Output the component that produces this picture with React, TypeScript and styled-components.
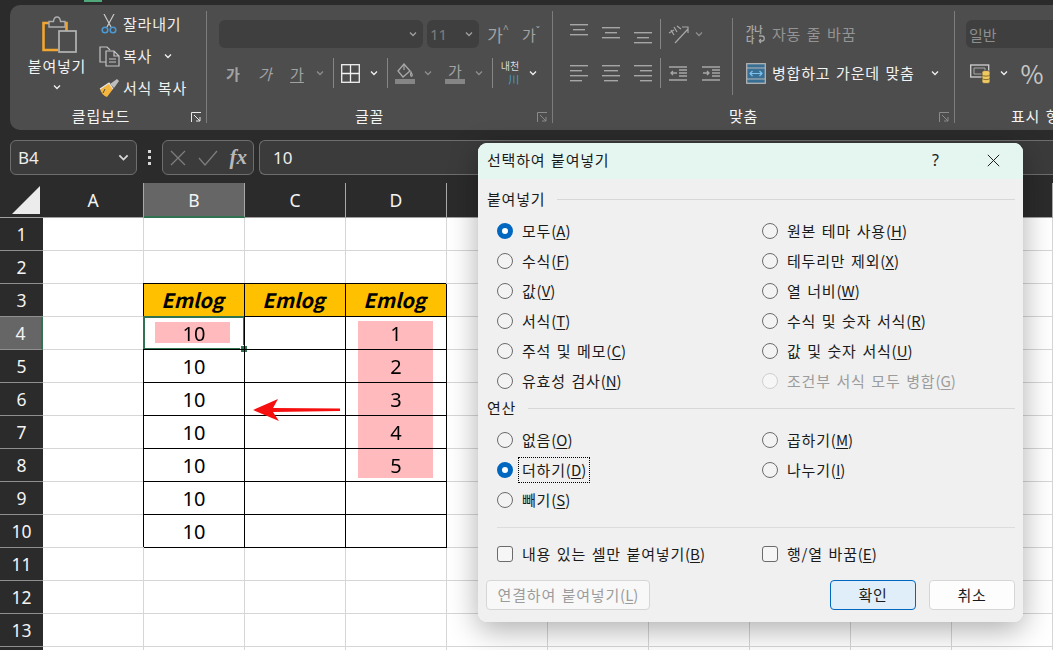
import React from 'react'
import styled, { createGlobalStyle } from 'styled-components'

const KR = '"Noto Sans CJK KR", "Noto Sans", sans-serif'

const GlobalStyle = createGlobalStyle`
  html, body { margin: 0; padding: 0; background: #2b2b2b; }
  * { box-sizing: border-box; }
`

const Page = styled.div`
  position: relative;
  width: 1053px;
  height: 650px;
  overflow: hidden;
  background: #2b2b2b;
  font-family: ${KR};
  color: #f2f2f2;
`

const TopStrip = styled.div`
  height: 5px;
  padding-left: 84px;
`
const TabMark = styled.div`
  width: 18px;
  height: 2px;
  background: #4fa77a;
`

/* the CJK font sits low in its line box, this lifts it back by a pixel */
const Txt = styled.span`
  margin-bottom: 2px;
  font-size: 15px;
  letter-spacing: 0.8px;
  word-spacing: 1.5px;
  white-space: nowrap;
`

/* ---------- ribbon ---------- */
const Ribbon = styled.div`
  display: flex;
  height: 125px;
  margin-left: 10px;
  padding-top: 6px;
  background: #4d4d4d;
  border-radius: 10px 0 0 10px;
  overflow: hidden;
`
const Group = styled.section<{ $w: number; $last?: boolean }>`
  position: relative;
  display: flex;
  flex-direction: column;
  flex: none;
  width: ${p => p.$w}px;
  height: 112px;
  border-right: ${p => (p.$last ? 'none' : '1px solid #7c7c7c')};
`
const GroupBody = styled.div<{ $pl?: number }>`
  display: flex;
  height: 99px;
  padding-left: ${p => p.$pl || 0}px;
`
const GroupLabel = styled.div<{ $pr?: number }>`
  height: 12px;
  padding-right: ${p => p.$pr ?? 20}px;
  font-size: 15px;
  letter-spacing: 0.8px;
  word-spacing: 1.5px;
  line-height: 12px;
  text-align: center;
  color: #f4f4f4;
  white-space: nowrap;
`
const Launcher = styled.svg`
  position: absolute;
  right: 4px;
  bottom: 0;
`
const PasteColumn = styled.div`
  display: flex;
  flex-direction: column;
  align-items: center;
  width: 70px;
  margin-right: 5px;
  padding-top: 4px;
  line-height: 20px;
  color: #f4f4f4;
`
const PasteGlyph = styled.svg`
  margin-left: 6px;
`
const PasteText = styled.div`
  margin-top: 1px;
  font-size: 15px;
  letter-spacing: 0.8px;
  white-space: nowrap;
`
const PasteChevron = styled.div`
  display: flex;
  margin-top: 7px;
`
const SmallTools = styled.div`
  display: flex;
  flex-direction: column;
  gap: 6px;
`
const SmallTool = styled.div`
  display: flex;
  align-items: center;
  height: 26px;
  color: #f0f0f0;
`
const SmallIcon = styled.div`
  display: flex;
  justify-content: center;
  width: 24px;
  margin-right: 2px;
`
const ToolStack = styled.div<{ $w?: number; $pl?: number }>`
  display: flex;
  flex-direction: column;
  gap: 11px;
  padding-top: 9px;
  padding-left: ${p => p.$pl || 0}px;
  width: ${p => (p.$w ? `${p.$w}px` : 'auto')};
`
const ToolRow = styled.div`
  display: flex;
  align-items: center;
  height: 28px;
`
const Slot = styled.div<{ $w: number; $dim?: boolean; $size?: number; $bold?: boolean; $ml?: number; $color?: string }>`
  display: flex;
  flex: none;
  align-items: center;
  justify-content: center;
  width: ${p => p.$w}px;
  margin-left: ${p => p.$ml || 0}px;
  font-size: ${p => p.$size || 15}px;
  font-weight: ${p => (p.$bold ? 700 : 400)};
  color: ${p => p.$color || (p.$dim ? '#a2a2a2' : '#f0f0f0')};
`
const Caret = styled.span`
  align-self: flex-start;
  font-family: "Noto Sans", sans-serif;
  font-size: 10px;
  line-height: 14px;
`
const SelectBox = styled.div<{ $w: number; $kr?: boolean }>`
  display: flex;
  flex: none;
  align-items: center;
  justify-content: space-between;
  width: ${p => p.$w}px;
  height: 28px;
  margin-right: 4px;
  padding: 0 6px 0 3px;
  background: #3f3f3f;
  border-radius: 6px;
  font-family: ${p => (p.$kr ? KR : '"Noto Sans", sans-serif')};
  font-size: 15px;
  color: ${p => (p.$kr ? '#8e8e8e' : '#7d7d7d')};
`
const ToolSep = styled.div<{ $ml?: number }>`
  flex: none;
  width: 1px;
  height: 30px;
  margin-left: ${p => p.$ml || 0}px;
  background: #858585;
`
const TallSep = styled.div`
  flex: none;
  width: 1px;
  height: 77px;
  margin-top: 7px;
  background: #7c7c7c;
`
const WrapRow = styled.div<{ $dim?: boolean }>`
  display: flex;
  align-items: center;
  height: 28px;
  gap: 6px;
  color: ${p => (p.$dim ? '#949494' : '#f2f2f2')};
`
const MergeChevron = styled.span`
  display: flex;
  margin-left: 10px;
`
const Under = styled.span`
  text-decoration: underline;
  text-underline-offset: 2px;
`
const Stacked = styled.div`
  display: flex;
  flex-direction: column;
  align-items: flex-end;
  margin-top: -2px;
  font-size: 10px;
  line-height: 11px;
  color: #dcdcdc;
`
const Kawa = styled.span`
  margin-top: 3px;
  color: #4b9ad4;
  font-size: 11px;
  line-height: 11px;
`

/* ---------- formula bar ---------- */
const FormulaBar = styled.div`
  display: flex;
  align-items: center;
  height: 35px;
  margin-top: 10px;
  padding-left: 10px;
`
const BarBox = styled.div<{ $w?: number }>`
  display: flex;
  align-items: center;
  flex: ${p => (p.$w ? 'none' : '1')};
  width: ${p => (p.$w ? `${p.$w}px` : 'auto')};
  height: 35px;
  background: #3b3b3b;
  border: 1px solid #6e6e6e;
  border-radius: 6px;
  font-family: "Noto Sans", sans-serif;
  font-size: 17px;
  color: #ededed;
`
const NameBox = styled(BarBox)`
  justify-content: space-between;
  padding: 0 7px 0 7px;
`
const FormulaButtons = styled(BarBox)`
  justify-content: space-between;
  margin-right: 5px;
  padding: 0 6px 0 7px;
`
const FormulaText = styled(BarBox)`
  border-right: none;
  border-radius: 6px 0 0 6px;
  padding-left: 13px;
`
const Grip = styled.div`
  display: flex;
  flex-direction: column;
  gap: 3px;
  width: 25px;
  align-items: center;
  i {
    width: 3px;
    height: 3px;
    background: #d8d8d8;
  }
`
const Fx = styled.span`
  font-family: "Liberation Serif", serif;
  font-style: italic;
  font-weight: 700;
  font-size: 21px;
  color: #b9b9b9;
`

/* ---------- sheet ---------- */
const Sheet = styled.div`
  position: relative;
  display: grid;
  grid-template-columns: 43px repeat(10, 101px);
  grid-template-rows: 35px repeat(14, 33px);
  margin-top: 8px;
  background: #fff;
`
const Corner = styled.div`
  display: flex;
  align-items: flex-end;
  justify-content: flex-end;
  padding: 0 3px 3px 0;
  background: #2b2b2b;
  border-bottom: 1px solid #a0a0a0;
`
const Triangle = styled.div`
  width: 28px;
  height: 28px;
  background: #ececec;
  clip-path: polygon(100% 0, 100% 100%, 0 100%);
`
const ColHead = styled.div<{ $active?: boolean }>`
  display: flex;
  align-items: center;
  justify-content: center;
  background: ${p => (p.$active ? '#666666' : '#2b2b2b')};
  border-right: 1px solid #a8a8a8;
  border-bottom: ${p => (p.$active ? '2px solid #2f7350' : '1px solid #a0a0a0')};
  font-family: "Noto Sans", sans-serif;
  font-size: 17.5px;
  color: #f4f4f4;
`
const RowHead = styled.div<{ $active?: boolean }>`
  display: flex;
  align-items: center;
  justify-content: center;
  background: ${p => (p.$active ? '#666666' : '#2b2b2b')};
  border-right: ${p => (p.$active ? '2px solid #2f7350' : 'none')};
  border-bottom: 1px solid #8f8f8f;
  font-family: "Noto Sans", sans-serif;
  font-size: 17.5px;
  color: #f4f4f4;
`
const Cell = styled.div<{ $boxed?: boolean; $head?: boolean }>`
  position: relative;
  display: flex;
  align-items: center;
  justify-content: center;
  padding-bottom: ${p => (p.$head ? 2 : 0)}px;
  padding-right: ${p => (p.$head ? 3 : 0)}px;
  background: ${p => (p.$head ? '#ffc000' : 'transparent')};
  border-right: 1px solid ${p => (p.$boxed ? '#000' : '#d6d6d6')};
  border-bottom: 1px solid ${p => (p.$boxed ? '#000' : '#d6d6d6')};
  box-shadow: ${p => (p.$boxed ? '-1px -1px 0 #000' : 'none')};
  z-index: ${p => (p.$boxed ? 1 : 0)};
  font-size: 20px;
  font-weight: ${p => (p.$head ? 700 : 400)};
  font-style: ${p => (p.$head ? 'italic' : 'normal')};
  font-family: ${p => (p.$head ? KR : '"Noto Sans", sans-serif')};
  color: #000;
`
const Highlight = styled.div<{ $left: number; $top: number; $bottom: number }>`
  position: absolute;
  left: ${p => p.$left}px;
  top: ${p => p.$top}px;
  bottom: ${p => p.$bottom}px;
  width: 75px;
  background: #ffbabd;
  mix-blend-mode: multiply;
`
const Selection = styled.div`
  position: absolute;
  inset: -1px -1px -1px -1px;
  border: 2px solid #2f7350;
  pointer-events: none;
`
const Handle = styled.div`
  position: absolute;
  right: -4px;
  bottom: -4px;
  width: 6px;
  height: 6px;
  background: #2f7350;
  outline: 1px solid #fff;
`
const Arrow = styled.svg`
  position: absolute;
  left: 253px;
  top: 215px;
  z-index: 2;
`

/* ---------- dialog ---------- */
const Dialog = styled.div`
  position: absolute;
  left: 478px;
  top: 143px;
  z-index: 5;
  display: flex;
  flex-direction: column;
  width: 545px;
  height: 479px;
  background: #f0f0f0;
  border-radius: 9px;
  overflow: hidden;
  color: #1a1a1a;
`
const DialogShadow = styled.div`
  position: absolute;
  left: 478px;
  top: 143px;
  z-index: 4;
  width: 545px;
  height: 479px;
  border-radius: 9px;
  box-shadow: 0 8px 30px rgba(0, 0, 0, 0.32);
`
const TitleBar = styled.div`
  display: flex;
  align-items: center;
  flex: none;
  height: 36px;
  padding: 0 0 2px 9px;
  background: #e5f6f1;
`
const TitleText = styled(Txt)`
  flex: 1;
`
const Help = styled.div`
  width: 57px;
  padding-left: 11px;
  font-family: "Noto Sans", sans-serif;
  font-size: 16px;
`
const CloseBox = styled.div`
  display: flex;
  width: 30px;
  margin-right: 15px;
  justify-content: center;
`
const DialogBody = styled.div`
  display: flex;
  flex-direction: column;
  flex: 1;
  padding: 9px 8px 12px 9px;
`
const SectionHead = styled.div`
  display: flex;
  align-items: center;
  gap: 12px;
  height: 22px;
  &::after {
    content: '';
    flex: 1;
    height: 1px;
    background: #d8d8d8;
  }
`
const OptionGrid = styled.div<{ $mb?: number }>`
  display: grid;
  grid-template-columns: 265px 1fr;
  grid-auto-rows: 30px;
  margin-top: 6px;
  padding-left: 10px;
  margin-bottom: ${p => p.$mb || 0}px;
`
const Option = styled.div<{ $dim?: boolean }>`
  display: flex;
  align-items: center;
  gap: 9px;
  color: ${p => (p.$dim ? '#9c9c9c' : '#1a1a1a')};
`
const Radio = styled.span<{ $on?: boolean; $dim?: boolean }>`
  flex: none;
  width: 16px;
  height: 16px;
  border-radius: 50%;
  border: ${p => (p.$on ? '5px solid #0067c0' : `1px solid ${p.$dim ? '#cfcfcf' : '#6b6b6b'}`)};
  background: ${p => (p.$on ? '#fff' : p.$dim ? '#f6f6f6' : '#f3f3f3')};
`
const Check = styled.span`
  flex: none;
  width: 16px;
  height: 16px;
  border: 1px solid #6b6b6b;
  border-radius: 3px;
  background: #f6f6f6;
`
const Focus = styled.span`
  display: flex;
  margin: -2px -3px;
  padding: 1px 3px 0;
  outline: 1px dotted #000;
`
const Paren = styled.span`
  letter-spacing: 0;
`
const Mn = styled.span`
  text-decoration: underline;
  text-underline-offset: 2px;
  text-decoration-thickness: 1px;
`
const Divider = styled.div`
  height: 1px;
  margin: 12px 0 0 10px;
  background: #dcdcdc;
`
const CheckGrid = styled(OptionGrid)`
  margin-top: 11px;
`
const ButtonRow = styled.div`
  display: flex;
  align-items: center;
  margin: 11px 0 0 -1px;
`
const Button = styled.div<{ $w: number; $primary?: boolean; $dim?: boolean }>`
  display: flex;
  align-items: center;
  justify-content: center;
  width: ${p => p.$w}px;
  height: 30px;
  background: ${p => (p.$primary ? '#e0eef9' : p.$dim ? '#f8f8f8' : '#fdfdfd')};
  border: 1px solid ${p => (p.$primary ? '#0067c0' : '#d6d6d6')};
  border-radius: 4px;
  color: ${p => (p.$dim ? '#9c9c9c' : '#1a1a1a')};
`
const ButtonGap = styled.div<{ $w?: number }>`
  flex: ${p => (p.$w ? 'none' : 1)};
  width: ${p => (p.$w ? `${p.$w}px` : 'auto')};
`

/* ---------- drawn icons ---------- */
const Chevron = ({ c = '#f0f0f0', s = 8 }: { c?: string; s?: number }) => (
  <svg width={s} height={s} viewBox="0 0 8 8" style={{ flex: 'none' }}>
    <path d="M1 2.5 4 5.5 7 2.5" fill="none" stroke={c} strokeWidth="1.3" />
  </svg>
)
const LauncherIcon = ({ dim }: { dim?: boolean }) => (
  <Launcher width="11" height="11" viewBox="0 0 11 11" fill="none" stroke={dim ? '#8a8a8a' : '#e8e8e8'}>
    <path d="M.5 10V.5H10M3 3l6 6M9 5v4H5" />
  </Launcher>
)
const PasteIcon = () => (
  <PasteGlyph width="36" height="40" viewBox="0 0 36 40" fill="none">
    <path d="M8 8H1.500v27H16" stroke="#f0a630" strokeWidth="2.6" />
    <path d="M19 8h5.500v8" stroke="#f0a630" strokeWidth="2.6" />
    <path d="M7 12V6.500h4.500c.5-6 6.500-6 7 0H23V12z" stroke="#adadad" strokeWidth="1.4" fill="#4d4d4d" />
    <rect x="17" y="16" width="17" height="21" stroke="#b4b4b4" strokeWidth="1.7" fill="#4d4d4d" />
  </PasteGlyph>
)
const ScissorsIcon = () => (
  <svg width="16" height="20" viewBox="0 0 16 20" fill="none">
    <path d="M3 0l7 13M13 0 6 13" stroke="#c9c9c9" strokeWidth="1.2" />
    <circle cx="4" cy="16" r="2.800" stroke="#4b9ad4" strokeWidth="1.5" />
    <circle cx="12" cy="16" r="2.800" stroke="#4b9ad4" strokeWidth="1.5" />
  </svg>
)
const CopyIcon = () => (
  <svg width="21" height="21" viewBox="0 0 21 21" fill="none" stroke="#c4c4c4" strokeWidth="1.2">
    <path d="M8 16H1V1h7l3 3" />
    <path d="M7 5h8l5 5v10H7zM15 5v5h5" fill="#4d4d4d" />
    <path d="M10 13h7M10 16h7" strokeWidth="1" />
  </svg>
)
const PainterIcon = () => (
  <svg width="21" height="20" viewBox="0 0 21 20" fill="none">
    <path d="M1 11 10 5l4 6-6 8C5 18 2 15 1 11z" fill="#f5b640" />
    <path d="M1 11 10 5l4 6" stroke="#e8e8e8" strokeWidth="1.2" />
    <path d="M6 11 4 15" stroke="#4d4d4d" strokeWidth="1" />
    <path d="M11 6 18 1l2 2-5 7z" fill="#bdbdbd" />
  </svg>
)
const BorderIcon = () => (
  <svg width="19" height="19" viewBox="0 0 19 19" fill="none" stroke="#f2f2f2" strokeWidth="1.3">
    <rect x=".7" y=".7" width="17.600" height="17.600" />
    <path d="M9.500 1v17M1 9.500h17" />
  </svg>
)
const FillIcon = () => (
  <svg width="21" height="21" viewBox="0 0 21 21" fill="none">
    <path d="M9 1 3 8l5 6 7-6z" stroke="#a8a8a8" strokeWidth="1.3" />
    <path d="M9 1v6M16 9c1 2 2 3 1 4s-2-1-1-4z" stroke="#a8a8a8" strokeWidth="1.2" />
    <rect x="0" y="16" width="20" height="5" fill="#858585" />
  </svg>
)
const UnderBar = styled.div`
  display: flex;
  flex-direction: column;
  align-items: center;
  width: 20px;
  line-height: 17px;
  &::after {
    content: '';
    width: 20px;
    height: 5px;
    background: #858585;
  }
`
const AlignIcon = ({ widths, gap = 5 }: { widths: number[]; gap?: number }) => (
  <svg width="18" height={gap * (widths.length - 1) + 2} viewBox={`0 0 18 ${gap * (widths.length - 1) + 2}`}>
    {widths.map((w, i) => (
      <rect key={i} x={w < 0 ? 18 + w : (18 - w) * (w === 14 ? 0.5 : 0)} y={i * gap} width={Math.abs(w)} height="1.4" fill="#a6a6a6" />
    ))}
  </svg>
)
const VerticalAlign = ({ offset }: { offset: number }) => (
  <svg width="18" height="16" viewBox="0 0 18 16" style={{ transform: `translateY(${offset}px)` }}>
    <rect x="0" y="0" width="18" height="1.4" fill="#a6a6a6" />
    <rect x="3" y="5" width="12" height="1.4" fill="#a6a6a6" />
    <rect x="0" y="10" width="18" height="1.4" fill="#a6a6a6" />
  </svg>
)
const OrientIcon = () => (
  <svg width="21" height="20" viewBox="0 0 21 20" fill="none" stroke="#a6a6a6" strokeWidth="1.2">
    <path d="M7 19 20 5M14 3h6v6" />
    <path d="M1 9l5-3M3 6l3 5M6 3l3 5M9 2l4 3" />
  </svg>
)
const IndentIcon = ({ right }: { right?: boolean }) => (
  <svg width="18" height="15" viewBox="0 0 18 15" fill="none" stroke="#a6a6a6" strokeWidth="1.3">
    <path d="M0 1h18M10 7h8M10 4h8M10 10h8M0 14h18" />
    <path d={right ? 'M1 7h6M5 5l2 2-2 2' : 'M8 7H2M4 5 2 7l2 2'} />
  </svg>
)
const WrapIcon = () => (
  <svg width="20" height="21" viewBox="0 0 20 21" fill="none" stroke="#a6a6a6" strokeWidth="1.3">
    <path d="M13 17h3c3 0 3-5 0-5h-3M13 17l2-2M13 17l2 2" />
    <text x="0" y="9" fontSize="9" fontWeight="700" fill="#a6a6a6" stroke="none" fontFamily={KR}>가나</text>
    <text x="0" y="19" fontSize="9" fontWeight="700" fill="#a6a6a6" stroke="none" fontFamily={KR}>다</text>
  </svg>
)
const MergeIcon = () => (
  <svg width="20" height="21" viewBox="0 0 20 21" fill="none">
    <rect x=".7" y=".7" width="18.600" height="19.600" fill="#3a6f94" stroke="#b8b8b8" strokeWidth="1.2" />
    <path d="M1 5h18M1 16h18" stroke="#b8b8b8" strokeWidth="1.2" />
    <path d="M4 10.500h12M6.500 8 4 10.500 6.500 13M13.500 8l2.500 2.500-2.500 2.500" stroke="#7cc0ee" strokeWidth="1.2" />
  </svg>
)
const CurrencyIcon = () => (
  <svg width="22" height="21" viewBox="0 0 22 21" fill="none">
    <rect x=".7" y="2" width="18" height="12" stroke="#d0d0d0" strokeWidth="1.3" />
    <path d="M4 5h11v6H4z" stroke="#a8a8a8" strokeWidth="1" />
    <path d="M12 9c0-2 8-2 8 0v10c0 2-8 2-8 0z" fill="#f0c860" stroke="#4d4d4d" strokeWidth=".8" />
    <path d="M12 12c1 1.500 7 1.500 8 0M12 15.500c1 1.500 7 1.500 8 0" stroke="#6b5a20" strokeWidth=".8" />
  </svg>
)
const CrossIcon = ({ s, c, w }: { s: number; c: string; w: number }) => (
  <svg width={s} height={s} viewBox="0 0 16 16" fill="none" stroke={c} strokeWidth={w}>
    <path d="M1 1l14 14M15 1 1 15" />
  </svg>
)
const TickIcon = () => (
  <svg width="20" height="16" viewBox="0 0 20 16" fill="none" stroke="#7d7d7d" strokeWidth="1.3">
    <path d="M1 8l6 7L19 1" />
  </svg>
)

// letters past D sit behind the dialog, so their headers stay empty
const COLS = ['A', 'B', 'C', 'D', '', '', '', '', '', '']
const ROWS = Array.from({ length: 14 }, (_, i) => i + 1)
const TABLE_COLS = [1, 2, 3]
const LOWER = ['1', '2', '3', '4', '5']

const pasteOptions: [string, string, string, string][] = [
  ['모두', 'A', '원본 테마 사용', 'H'],
  ['수식', 'F', '테두리만 제외', 'X'],
  ['값', 'V', '열 너비', 'W'],
  ['서식', 'T', '수식 및 숫자 서식', 'R'],
  ['주석 및 메모', 'C', '값 및 숫자 서식', 'U'],
  ['유효성 검사', 'N', '조건부 서식 모두 병합', 'G'],
]

const Label = ({ text, k }: { text: string; k: string }) => (
  <Txt>
    {text}
    <Paren>(<Mn>{k}</Mn>)</Paren>
  </Txt>
)

const renderCell = (row: number, col: number) => {
  const boxed = TABLE_COLS.includes(col) && row >= 3 && row <= 10
  if (boxed && row === 3) return <Cell key={`${row}-${col}`} $boxed $head>Emlog</Cell>
  let content: React.ReactNode = null
  if (boxed && col === 1) content = '10'
  if (boxed && col === 3 && row >= 4 && row <= 8) content = LOWER[row - 4]
  return (
    <Cell key={`${row}-${col}`} $boxed={boxed}>
      {content}
      {col === 1 && row === 4 && <Highlight $left={11} $top={5} $bottom={6} />}
      {col === 3 && row >= 4 && row <= 8 && (
        <Highlight $left={12} $top={row === 4 ? 4 : -1} $bottom={row === 8 ? 3 : -1} />
      )}
      {col === 1 && row === 4 && (
        <Selection>
          <Handle />
        </Selection>
      )}
    </Cell>
  )
}

const App = () => (
  <Page>
    <GlobalStyle />
    <TopStrip>
      <TabMark />
    </TopStrip>
    <Ribbon>
      <Group $w={197}>
        <GroupBody $pl={12}>
          <PasteColumn>
            <PasteIcon />
            <PasteText>붙여넣기</PasteText>
            <PasteChevron>
              <Chevron />
            </PasteChevron>
          </PasteColumn>
          <SmallTools>
            <SmallTool>
              <SmallIcon><ScissorsIcon /></SmallIcon>
              <Txt>잘라내기</Txt>
            </SmallTool>
            <SmallTool>
              <SmallIcon><CopyIcon /></SmallIcon>
              <Txt>복사</Txt>
              <Slot $w={30} $ml={1}><Chevron /></Slot>
            </SmallTool>
            <SmallTool>
              <SmallIcon><PainterIcon /></SmallIcon>
              <Txt>서식 복사</Txt>
            </SmallTool>
          </SmallTools>
        </GroupBody>
        <GroupLabel $pr={14}>클립보드</GroupLabel>
        <LauncherIcon />
      </Group>

      <Group $w={346}>
        <GroupBody $pl={12}>
          <ToolStack>
            <ToolRow>
              <SelectBox $w={204}>
                <span />
                <Chevron c="#a0a0a0" />
              </SelectBox>
              <SelectBox $w={52}>
                11
                <Chevron c="#a0a0a0" />
              </SelectBox>
              <Slot $w={30} $size={17} $dim>가<Caret>^</Caret></Slot>
              <Slot $w={36} $size={15} $dim>가<Caret>ˇ</Caret></Slot>
            </ToolRow>
            <ToolRow>
              <Slot $w={28} $dim $bold>가</Slot>
              <Slot $w={36} $dim><i>가</i></Slot>
              <Slot $w={28} $dim><Under>가</Under></Slot>
              <Slot $w={18}><Chevron c="#8e8e8e" /></Slot>
              <ToolSep $ml={4} />
              <Slot $w={32}><BorderIcon /></Slot>
              <Slot $w={16}><Chevron /></Slot>
              <ToolSep $ml={5} />
              <Slot $w={34}><FillIcon /></Slot>
              <Slot $w={12}><Chevron c="#8e8e8e" /></Slot>
              <Slot $w={42} $dim><UnderBar>가</UnderBar></Slot>
              <Slot $w={6}><Chevron c="#8e8e8e" /></Slot>
              <ToolSep $ml={10} />
              <Slot $w={34}>
                <Stacked>
                  내천
                  <Kawa>川</Kawa>
                </Stacked>
              </Slot>
              <Slot $w={12}><Chevron /></Slot>
            </ToolRow>
          </ToolStack>
        </GroupBody>
        <GroupLabel>글꼴</GroupLabel>
        <LauncherIcon dim />
      </Group>

      <Group $w={402}>
        <GroupBody $pl={10}>
          <ToolStack $w={169}>
            <ToolRow>
              <Slot $w={32}><VerticalAlign offset={-2} /></Slot>
              <Slot $w={32}><VerticalAlign offset={1} /></Slot>
              <Slot $w={32}><VerticalAlign offset={6} /></Slot>
              <ToolSep $ml={1} />
              <Slot $w={34}><OrientIcon /></Slot>
              <Slot $w={8}><Chevron c="#8e8e8e" /></Slot>
            </ToolRow>
            <ToolRow>
              <Slot $w={32}><AlignIcon widths={[18, 12, 18, 12]} /></Slot>
              <Slot $w={32}><AlignIcon widths={[18, 14, 18, 14]} /></Slot>
              <Slot $w={32}><AlignIcon widths={[18, -12, 18, -12]} /></Slot>
              <ToolSep $ml={1} />
              <Slot $w={34}><IndentIcon /></Slot>
              <Slot $w={32}><IndentIcon right /></Slot>
            </ToolRow>
          </ToolStack>
          <TallSep />
          <ToolStack $pl={13}>
            <WrapRow $dim>
              <WrapIcon />
              <Txt>자동 줄 바꿈</Txt>
            </WrapRow>
            <WrapRow>
              <MergeIcon />
              <Txt>병합하고 가운데 맞춤</Txt>
              <MergeChevron><Chevron /></MergeChevron>
            </WrapRow>
          </ToolStack>
        </GroupBody>
        <GroupLabel>맞춤</GroupLabel>
        <LauncherIcon dim />
      </Group>

      <Group $w={176} $last>
        <GroupBody $pl={11}>
          <ToolStack>
            <ToolRow>
              <SelectBox $w={200} $kr>일반</SelectBox>
            </ToolRow>
            <ToolRow>
              <Slot $w={30}><CurrencyIcon /></Slot>
              <Slot $w={16}><Chevron /></Slot>
              <Slot $w={40} $size={25} $color="#c6c6c6">%</Slot>
            </ToolRow>
          </ToolStack>
        </GroupBody>
        <GroupLabel $pr={0}>표시 형식</GroupLabel>
      </Group>
    </Ribbon>

    <FormulaBar>
      <NameBox $w={127}>
        B4
        <Chevron c="#d8d8d8" s={11} />
      </NameBox>
      <Grip><i /><i /><i /></Grip>
      <FormulaButtons $w={92}>
        <CrossIcon s={16} c="#7d7d7d" w={1.3} />
        <TickIcon />
        <Fx>fx</Fx>
      </FormulaButtons>
      <FormulaText>10</FormulaText>
    </FormulaBar>

    <Sheet>
      <Corner><Triangle /></Corner>
      {COLS.map((c, i) => (
        <ColHead key={i} $active={c === 'B'}>{c}</ColHead>
      ))}
      {ROWS.map(r => (
        <React.Fragment key={r}>
          <RowHead $active={r === 4}>{r < 14 ? r : null}</RowHead>
          {COLS.map((_, col) => renderCell(r, col))}
        </React.Fragment>
      ))}
      <Arrow width="87" height="24" viewBox="0 0 87 24">
        <path d="M0 12 25 1l-5 9 67 .5v2.500L20 14l6 9z" fill="#f50f0f" />
      </Arrow>
    </Sheet>

    <DialogShadow />
    <Dialog>
      <TitleBar>
        <TitleText>선택하여 붙여넣기</TitleText>
        <Help>?</Help>
        <CloseBox><CrossIcon s={13} c="#1a1a1a" w={1.2} /></CloseBox>
      </TitleBar>
      <DialogBody>
        <SectionHead><Txt>붙여넣기</Txt></SectionHead>
        <OptionGrid $mb={1}>
          {pasteOptions.map(([a, ak, b, bk], i) => (
            <React.Fragment key={a}>
              <Option>
                <Radio $on={i === 0} />
                <Label text={a} k={ak} />
              </Option>
              <Option $dim={i === 5}>
                <Radio $dim={i === 5} />
                <Label text={b} k={bk} />
              </Option>
            </React.Fragment>
          ))}
        </OptionGrid>
        <SectionHead><Txt>연산</Txt></SectionHead>
        <OptionGrid>
          <Option><Radio /><Label text="없음" k="O" /></Option>
          <Option><Radio /><Label text="곱하기" k="M" /></Option>
          <Option>
            <Radio $on />
            <Focus><Label text="더하기" k="D" /></Focus>
          </Option>
          <Option><Radio /><Label text="나누기" k="I" /></Option>
          <Option><Radio /><Label text="빼기" k="S" /></Option>
        </OptionGrid>
        <Divider />
        <CheckGrid>
          <Option><Check /><Label text="내용 있는 셀만 붙여넣기" k="B" /></Option>
          <Option><Check /><Label text="행/열 바꿈" k="E" /></Option>
        </CheckGrid>
        <ButtonRow>
          <Button $w={164} $dim><Label text="연결하여 붙여넣기" k="L" /></Button>
          <ButtonGap />
          <Button $w={86} $primary><Txt>확인</Txt></Button>
          <ButtonGap $w={13} />
          <Button $w={86}><Txt>취소</Txt></Button>
        </ButtonRow>
      </DialogBody>
    </Dialog>
  </Page>
)

export default App
